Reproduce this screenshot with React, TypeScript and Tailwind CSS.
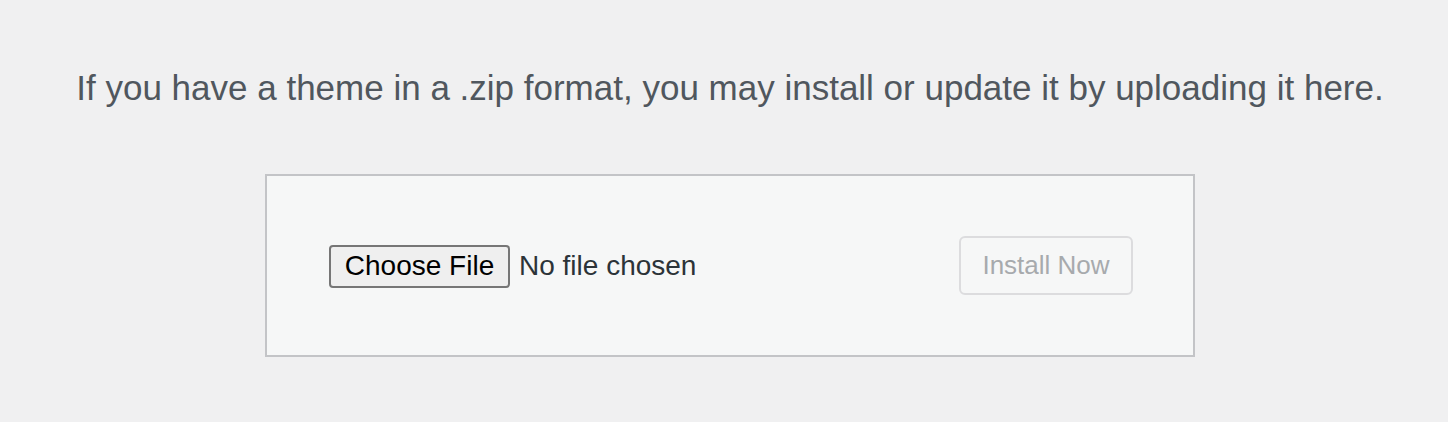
import React from "react";

export default function App() {
  return (
    <div className="min-h-[422px] w-full bg-[#f0f0f1] pl-3 font-['Liberation_Sans',Arial,sans-serif]">
      <div className="flex flex-col items-center">
        <p className="pt-[65px] text-center text-[35px] leading-[46px] text-[#50575e]">
          If you have a theme in a .zip format, you may install or update it by uploading it here.
        </p>
        <form className="mt-[63px] flex w-[930px] items-center justify-between border-2 border-[#c3c4c7] bg-[#f6f7f7] px-[62px] py-[60px]">
          <div className="flex items-center pt-[1px]">
            <span className="flex h-[43px] w-[181px] items-center justify-center rounded-[4px] border-2 border-[#767676] bg-[#efefef] text-[28px] text-black">
              Choose File
            </span>
            <span className="ml-[9px] text-[28px] text-[#2c3338]">No file chosen</span>
          </div>
          <button
            type="button"
            disabled
            className="mr-[-2px] flex h-[59px] w-[174px] items-center justify-center rounded-[6px] border-2 border-[#dcdcde] bg-[#f6f7f7] text-[26px] text-[#a7aaad]"
          >
            Install Now
          </button>
        </form>
      </div>
    </div>
  );
}
